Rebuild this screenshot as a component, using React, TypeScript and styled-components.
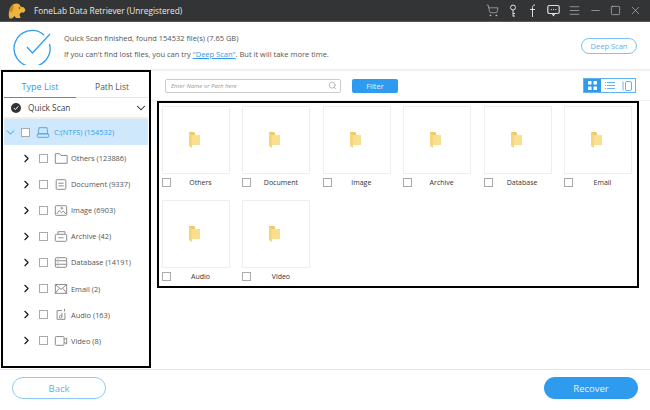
import React from "react";
import styled, { createGlobalStyle } from "styled-components";
import { ChevronDown, ChevronRight, Menu, Minus, Search, ShoppingCart, Square, X } from "lucide-react";

const GlobalStyle = createGlobalStyle`
  html, body { margin: 0; padding: 0; background: #fff; }
  * { box-sizing: border-box; }
  body { font-family: "Open Sans", "Liberation Sans", sans-serif; }
`;

const tree = [
  { icon: "folder", label: "Others (123886)" },
  { icon: "doc", label: "Document (9337)" },
  { icon: "image", label: "Image (6903)" },
  { icon: "archive", label: "Archive (42)" },
  { icon: "database", label: "Database (14191)" },
  { icon: "email", label: "Email (2)" },
  { icon: "audio", label: "Audio (163)" },
  { icon: "video", label: "Video (8)" },
];

const folders = ["Others", "Document", "Image", "Archive", "Database", "Email", "Audio", "Video"];

const TreeIcon = ({ name, color = "#888" }: { name: string; color?: string }) => (
  <svg width="14" height="13" viewBox="0 0 16 14" fill="none" stroke={color} strokeWidth="1.100">
    {name === "drive" && (
      <>
        <path d="M3.500 1.500h9l1 7h-11z" />
        <rect x="1.500" y="8.500" width="13" height="4" rx="1" />
      </>
    )}
    {name === "folder" && <path d="M1.500 12.500v-11h5l1.500 2h7v9z" />}
    {name === "doc" && (
      <>
        <rect x="2.500" y="1.500" width="11" height="11" rx="1" />
        <path d="M5 5.500h6M5 8.500h6" />
      </>
    )}
    {name === "image" && (
      <>
        <rect x="1.500" y="1.500" width="13" height="11" rx="1" />
        <path d="M3 11l3-4 2.500 2.500 2-2 3 3.500" />
        <circle cx="9" cy="4.500" r="1" />
      </>
    )}
    {name === "archive" && (
      <>
        <path d="M4.500 4V1.500h8V4" />
        <rect x="1.500" y="4.500" width="13" height="8" rx="1" />
        <path d="M5 8.500h6" />
      </>
    )}
    {name === "database" && (
      <>
        <rect x="1.500" y="1.500" width="13" height="11" rx="1.500" />
        <path d="M1.500 5h13M1.500 9h13M4 3.200h1M4 7h1M4 10.800h1" />
      </>
    )}
    {name === "email" && (
      <>
        <rect x="1.500" y="2.500" width="13" height="10" />
        <path d="M1.500 2.500L8 8l6.500-5.500M1.500 12.500L6 6.800M14.500 12.500L10 6.800" />
      </>
    )}
    {name === "audio" && (
      <>
        <path d="M9 2.500H3.500v10h9V5" />
        <circle cx="7.500" cy="9.500" r="1.500" />
        <path d="M9 9.500V5M12 .5v3" />
      </>
    )}
    {name === "video" && (
      <>
        <rect x="1.500" y="2.500" width="10" height="10" rx="1" />
        <path d="M11.500 6l3-2v7l-3-2" />
      </>
    )}
  </svg>
);

const FolderGlyph = () => (
  <svg width="11" height="16" viewBox="0 0 11 16">
    <path d="M0 0h5l1 1v12H1l-1 1z" fill="#eec766" />
    <path d="M3 3h8v10H3z" fill="#fadf8e" />
    <path d="M0 0l3 3v13l-3-2z" fill="#f6d67c" />
  </svg>
);

const App = () => (
  <Page>
    <GlobalStyle />
    <TitleBar>
      <svg width="18" height="16" viewBox="0 0 18 16">
        <path
          d="M5 1.500c2-1.500 5-1.500 6.500 0l1 2 3.500 1 1.500 2.500-1.500 2.500h-3l-1.500 2 1 3.500H8l-1.500-2L4 15.500H1.500C.5 13 .5 10 1.500 7z"
          fill="#edb33c"
        />
        <path d="M5 1.500C3 2.500 1.500 5 1.500 7c0 1.500 1 2.500 2 2.500 1.500-1.500 3-5 1.500-8z" fill="#c98a1e" />
        <circle cx="11.500" cy="5" r=".8" fill="#333" />
      </svg>
      <TitleText>FoneLab Data Retriever (Unregistered)</TitleText>
      <WindowIcons>
        <ShoppingCart size={13} strokeWidth={1} />
        <svg width="12" height="13" viewBox="0 0 12 13" fill="none" stroke="#ddd">
          <circle cx="6" cy="3.500" r="2.500" />
          <path d="M6 6v6.500M6 9.500h2M6 12h2" />
        </svg>
        <svg width="12" height="13" viewBox="0 0 12 13" fill="none" stroke="#ddd">
          <path d="M8 1C6 1 5.500 2 5.500 3.500V13M3 5.500h5" />
        </svg>
        <svg width="13" height="13" viewBox="0 0 13 13" fill="none" stroke="#ddd" strokeWidth="1.200">
          <rect x=".8" y="1.500" width="11.400" height="8" rx="1.500" />
          <path d="M5 9.500l1.500 2 1.500-2M3.800 5.500h1M6 5.500h1M8.200 5.500h1" />
        </svg>
        <Menu size={13} strokeWidth={1} />
        <Minus size={13} strokeWidth={1} />
        <Square size={11} strokeWidth={1.200} />
        <X size={13} strokeWidth={1} />
      </WindowIcons>
    </TitleBar>

    <Header>
      <svg width="38" height="38" viewBox="0 0 38 38" fill="none" stroke="#2f9bee" strokeWidth="1.300">
        <path d="M31 8A18 18 0 1 0 36.500 17" />
        <path d="M14 20l5.500 6L37 7" strokeWidth="1.200" />
      </svg>
      <Message>
        <MessageLine>Quick Scan finished, found 154532 file(s) (7.65 GB)</MessageLine>
        <MessageLine>
          If you can't find lost files, you can try <DeepLink>"Deep Scan"</DeepLink>. But it will take more time.
        </MessageLine>
      </Message>
      <OutlineSmall>Deep Scan</OutlineSmall>
    </Header>

    <Body>
      <Sidebar>
        <Tabs>
          <Tab $active>Type List</Tab>
          <Tab>Path List</Tab>
        </Tabs>
        <ScanRow>
          <ScanDot>
            <svg width="6" height="6" viewBox="0 0 6 6" fill="none" stroke="#fff">
              <path d="M.8 3l1.600 1.600L5.300 1.300" />
            </svg>
          </ScanDot>
          <ScanLabel>Quick Scan</ScanLabel>
          <ChevronDown size={14} color="#222" strokeWidth={1.800} />
        </ScanRow>
        <DriveRow>
          <DriveChevron size={13} color="#2f9bee" strokeWidth={1.800} />
          <Check />
          <TreeIcon name="drive" color="#4aa6ee" />
          <DriveLabel>C:(NTFS) (154532)</DriveLabel>
        </DriveRow>
        {tree.map((item) => (
          <TreeRow key={item.label}>
            <ChevronRight size={13} color="#111" strokeWidth={2} />
            <Check />
            <TreeIcon name={item.icon} />
            <TreeLabel>{item.label}</TreeLabel>
          </TreeRow>
        ))}
      </Sidebar>

      <Content>
        <Toolbar>
          <SearchBox>
            <SearchHint>Enter Name or Path here</SearchHint>
            <Search size={9} color="#aaa" />
          </SearchBox>
          <FilterButton>Filter</FilterButton>
          <ViewSwitch>
            <ViewButton $active>
              <svg width="9" height="9" viewBox="0 0 9 9" fill="#fff">
                <rect width="3.500" height="3.500" rx=".5" />
                <rect x="5.500" width="3.500" height="3.500" rx=".5" />
                <rect y="5.500" width="3.500" height="3.500" rx=".5" />
                <rect x="5.500" y="5.500" width="3.500" height="3.500" rx=".5" />
              </svg>
            </ViewButton>
            <ViewButton>
              <svg width="10" height="9" viewBox="0 0 10 9" fill="none" stroke="#62b3f2">
                <path d="M0 1.500h1M2 1.500h8M0 4.500h1M2 4.500h8M0 7.500h1M2 7.500h8" />
              </svg>
            </ViewButton>
            <ViewButton>
              <svg width="10" height="10" viewBox="0 0 10 10" fill="none" stroke="#62b3f2">
                <path d="M1 .5v9" />
                <rect x="3.500" y=".5" width="6" height="9" rx="1.500" />
              </svg>
            </ViewButton>
          </ViewSwitch>
        </Toolbar>
        <FolderPanel>
          {folders.map((name) => (
            <FolderCard key={name}>
              <Thumb>
                <FolderGlyph />
              </Thumb>
              <CardFoot>
                <Check />
                <CardName>{name}</CardName>
              </CardFoot>
            </FolderCard>
          ))}
        </FolderPanel>
      </Content>
    </Body>

    <Footer>
      <BackButton>Back</BackButton>
      <RecoverButton>Recover</RecoverButton>
    </Footer>
  </Page>
);

export default App;

const Page = styled.div`
  width: 650px;
  height: 410px;
  display: flex;
  flex-direction: column;
  overflow: hidden;
  background: #fff;
`;

const TitleBar = styled.div`
  height: 22px;
  flex: none;
  display: flex;
  align-items: center;
  padding: 0 8px 0 8px;
  background: #333436;
  border-bottom: 1px solid #55585c;
`;

const TitleText = styled.span`
  margin-left: 8px;
  font-size: 8.300px;
  color: #e8e8e8;
`;

const WindowIcons = styled.div`
  margin-left: auto;
  display: flex;
  align-items: center;
  gap: 8px;
  color: #ddd;
`;

const Header = styled.div`
  height: 49px;
  flex: none;
  display: flex;
  align-items: center;
  padding: 1px 13px 0 13px;
  border-bottom: 2px solid #f0f0f0;
`;

const Message = styled.div`
  margin-left: 13px;
  display: flex;
  flex-direction: column;
  gap: 5px;
`;

const MessageLine = styled.div`
  font-size: 7.500px;
  line-height: 11px;
  color: #555;
`;

const DeepLink = styled.span`
  color: #2f9bee;
  text-decoration: underline;
`;

const OutlineSmall = styled.div`
  margin-left: auto;
  width: 56px;
  height: 16px;
  border: 1px solid #7cc2f6;
  border-radius: 8px;
  display: flex;
  align-items: center;
  justify-content: center;
  font-size: 7.500px;
  color: #5fb0f1;
`;

const Body = styled.div`
  flex: 1;
  display: flex;
  min-height: 0;
`;

const Sidebar = styled.div`
  width: 150px;
  height: 298px;
  flex: none;
  margin-left: 1px;
  margin-top: -1px;
  border: 2px solid #000;
  display: flex;
  flex-direction: column;
  padding: 0 1px;
`;

const Tabs = styled.div`
  height: 26px;
  flex: none;
  display: flex;
  border-bottom: 1px solid #e6e6e6;
`;

const Tab = styled.div<{ $active?: boolean }>`
  flex: 1;
  display: flex;
  align-items: center;
  justify-content: center;
  padding-top: 3px;
  font-size: ${({ $active }) => ($active ? "9px" : "8.500px")};
  color: ${({ $active }) => ($active ? "#2f9bee" : "#555")};
  border-bottom: ${({ $active }) => ($active ? "1px solid #2f9bee" : "none")};
  margin-bottom: -1px;
`;

const ScanRow = styled.div`
  height: 21px;
  flex: none;
  display: flex;
  align-items: center;
  padding: 0 0 0 7px;
  background: #fff;
  border-bottom: 2px solid #eeeeee;
`;

const ScanDot = styled.span`
  width: 10px;
  height: 10px;
  border-radius: 50%;
  background: #333;
  display: flex;
  align-items: center;
  justify-content: center;
`;

const ScanLabel = styled.span`
  margin-left: 7px;
  margin-right: auto;
  font-size: 8.300px;
  color: #444;
`;

const DriveRow = styled.div`
  height: 26px;
  flex: none;
  display: flex;
  align-items: center;
  gap: 6px;
  background: #cfe8fb;
`;

const DriveChevron = styled(ChevronDown)`
  margin-right: -2px;
`;

const TreeRow = styled.div`
  height: 26.100px;
  flex: none;
  display: flex;
  align-items: center;
  padding-left: 16px;
  gap: 6px;
`;

const Check = styled.span`
  width: 9px;
  height: 9px;
  flex: none;
  border: 1px solid #aaa;
  background: #fff;
`;

const DriveLabel = styled.span`
  font-size: 7.400px;
  color: #3a9cec;
  margin-left: -2px;
`;

const TreeLabel = styled.span`
  font-size: 7.400px;
  color: #555;
  margin-left: -3px;
`;

const Content = styled.div`
  flex: 1;
  display: flex;
  flex-direction: column;
  min-width: 0;
  padding: 0 10px 0 6px;
`;

const Toolbar = styled.div`
  height: 30px;
  flex: none;
  display: flex;
  align-items: center;
  margin: 0 -10px 0 -6px;
  padding: 0 14px 0 14px;
  border-bottom: 1px solid #f0f0f0;
`;

const SearchBox = styled.div`
  width: 176px;
  height: 14px;
  border: 1px solid #ccc;
  border-radius: 2px;
  display: flex;
  align-items: center;
  justify-content: space-between;
  padding: 0 3px 0 5px;
`;

const SearchHint = styled.span`
  font-size: 6px;
  font-style: italic;
  color: #999;
`;

const FilterButton = styled.div`
  margin-left: 11px;
  width: 46px;
  height: 14px;
  background: #2f9bee;
  border-radius: 2px;
  display: flex;
  align-items: center;
  justify-content: center;
  font-size: 7.500px;
  color: #e6f4ff;
`;

const ViewSwitch = styled.div`
  margin-left: auto;
  display: flex;
  height: 15px;
  border: 1px solid #62b3f2;
`;

const ViewButton = styled.div<{ $active?: boolean }>`
  width: 17px;
  display: flex;
  align-items: center;
  justify-content: center;
  background: ${({ $active }) => ($active ? "#2f9bee" : "#fff")};
`;

const FolderPanel = styled.div`
  width: 482px;
  height: 187px;
  border: 2px solid #000;
  padding: 3px 0 0 3px;
  display: grid;
  grid-template-columns: repeat(6, 80.400px);
  grid-auto-rows: 94px;
  align-content: start;
`;

const FolderCard = styled.div`
  display: flex;
  flex-direction: column;
`;

const Thumb = styled.div`
  width: 68px;
  height: 68px;
  border: 1px solid #eeeeee;
  display: flex;
  align-items: center;
  justify-content: center;
  padding-right: 3px;
`;

const CardFoot = styled.div`
  width: 68px;
  height: 14px;
  margin-top: 1px;
  display: flex;
  align-items: center;
`;

const CardName = styled.span`
  flex: 1;
  text-align: center;
  font-size: 7px;
  color: #333;
`;

const Footer = styled.div`
  height: 41px;
  flex: none;
  display: flex;
  align-items: center;
  justify-content: space-between;
  padding: 0 12px 4px;
  border-top: 1px solid #e8e8e8;
`;

const BackButton = styled.div`
  width: 94px;
  height: 22px;
  border: 1px solid #8ccaf7;
  border-radius: 11px;
  display: flex;
  align-items: center;
  justify-content: center;
  font-size: 9.500px;
  color: #5fb0f1;
`;

const RecoverButton = styled.div`
  width: 94px;
  height: 22px;
  border-radius: 11px;
  background: #2f9bee;
  display: flex;
  align-items: center;
  justify-content: center;
  font-size: 9.500px;
  color: #e6f4ff;
`;
